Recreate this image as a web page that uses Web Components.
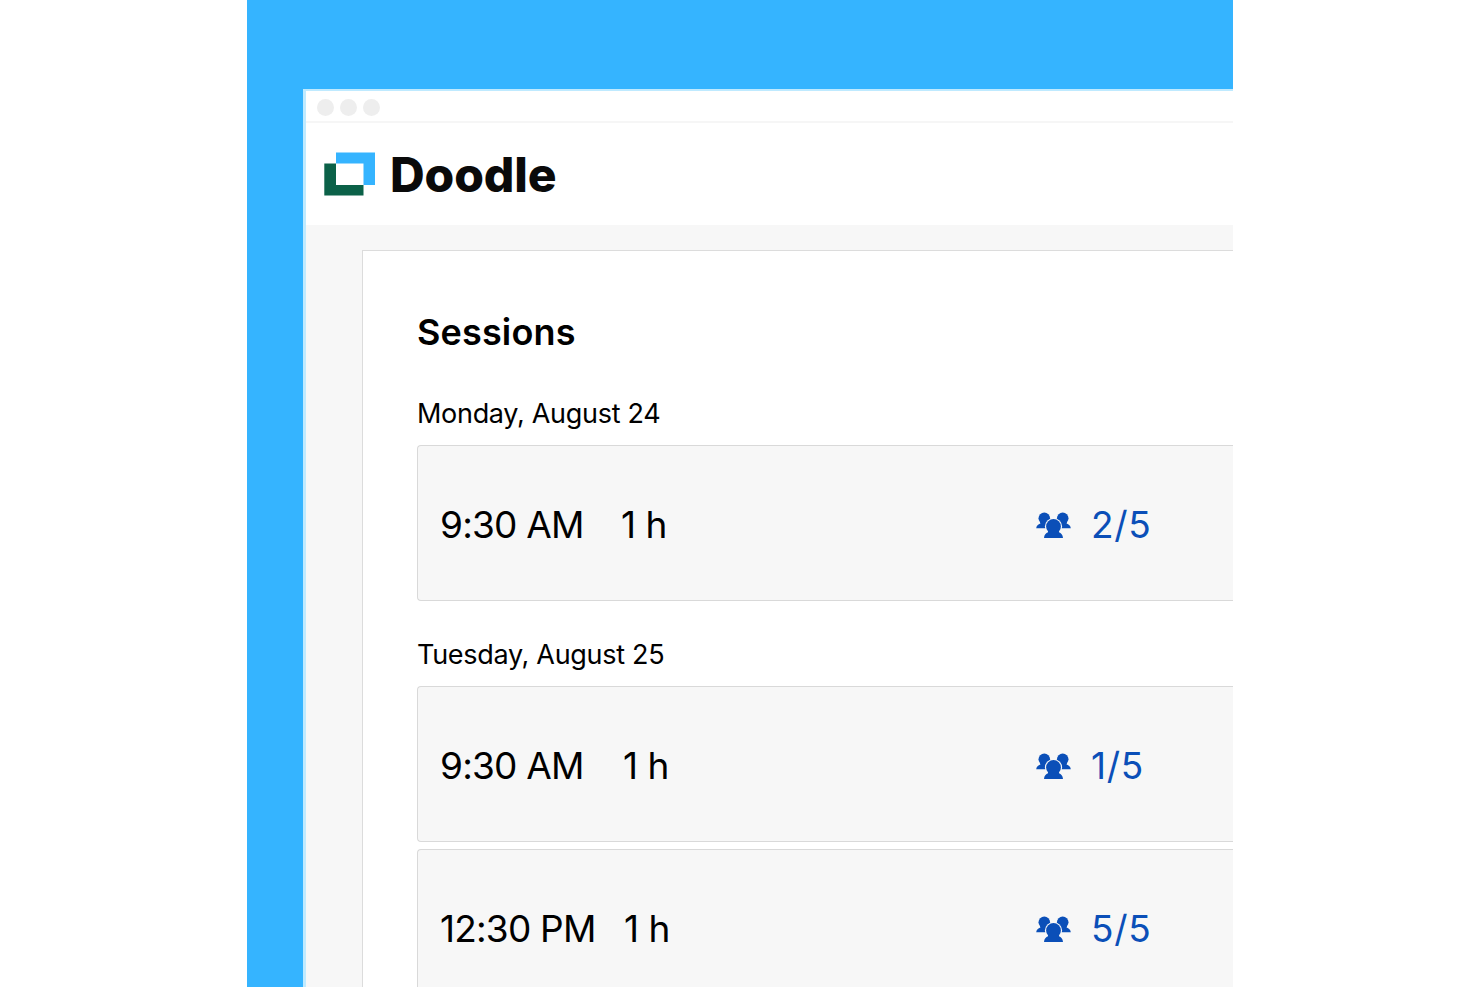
<!DOCTYPE html>
<html lang="en">
<head>
<meta charset="utf-8">
<title>Doodle</title>
<style>
  body {
    margin: 0;
    height: 987px;
    overflow: hidden;
    background: #fff;
    color: #000;
    font-family: Inter, "Liberation Sans", sans-serif;
  }
</style>
</head>
<body>
<app-stage>
  <browser-window>
    <doodle-logo slot="header">Doodle</doodle-logo>
    <session-list heading="Sessions">
      <session-day date="Monday, August 24">
        <session-row time="9:30 AM" duration="1 h" seats="2/5" style="--time-width: 181px"></session-row>
      </session-day>
      <session-day date="Tuesday, August 25">
        <session-row time="9:30 AM" duration="1 h" seats="1/5"></session-row>
        <session-row time="12:30 PM" duration="1 h" seats="5/5" style="--time-width: 184px"></session-row>
      </session-day>
    </session-list>
  </browser-window>
</app-stage>

<script>
class AppStage extends HTMLElement {
  constructor() {
    super();
    this.attachShadow({ mode: 'open' }).innerHTML = `
      <style>
        :host {
          display: block;
          box-sizing: border-box;
          width: 986px;
          height: 987px;
          margin: 0 auto;
          padding: 89px 0 0 56px;
          background: #35b4ff;
          overflow: hidden;
        }
      </style>
      <slot></slot>
    `;
  }
}
window.customElements.define('app-stage', AppStage);

class BrowserWindow extends HTMLElement {
  constructor() {
    super();
    this.attachShadow({ mode: 'open' }).innerHTML = `
      <style>
        :host {
          display: block;
          box-sizing: border-box;
          height: 898px;
          border: solid #bfeaff;
          border-width: 2px 0 0 3px;
          background: #f7f7f7;
        }
        .bar {
          display: flex;
          align-items: center;
          gap: 6px;
          box-sizing: border-box;
          height: 32px;
          padding: 2px 0 0 11px;
          border-bottom: 2px solid #f6f6f6;
          background: #fff;
        }
        .dot {
          width: 17px;
          height: 17px;
          border-radius: 50%;
          background: #eee;
        }
        header {
          display: flex;
          align-items: center;
          box-sizing: border-box;
          height: 102px;
          padding-left: 18px;
          background: #fff;
        }
        main {
          padding: 25px 0 0 56px;
        }
      </style>
      <div class="bar">
        <span class="dot"></span><span class="dot"></span><span class="dot"></span>
      </div>
      <header><slot name="header"></slot></header>
      <main><slot></slot></main>
    `;
  }
}
window.customElements.define('browser-window', BrowserWindow);

class DoodleLogo extends HTMLElement {
  constructor() {
    super();
    this.attachShadow({ mode: 'open' }).innerHTML = `
      <style>
        :host {
          display: flex;
          align-items: center;
          gap: 14px;
          color: #0a0a0a;
          font-size: 48px;
          font-weight: 800;
          line-height: 60px;
          letter-spacing: -0.1px;
        }
        svg {
          display: block;
        }
        span {
          padding-top: 1px;
        }
      </style>
      <svg width="52" height="44" viewBox="0 0 52 44">
        <path fill="#35b4ff" d="M12 0.5H51V33H39.5V11.5H12Z"/>
        <path fill="#0b6148" d="M0.3 11.5H12V33H39.5V43.5H0.3Z"/>
      </svg>
      <span><slot></slot></span>
    `;
  }
}
window.customElements.define('doodle-logo', DoodleLogo);

class SessionList extends HTMLElement {
  constructor() {
    super();
    this.attachShadow({ mode: 'open' }).innerHTML = `
      <style>
        :host {
          display: block;
          box-sizing: border-box;
          height: 737px;
          padding: 56px 0 0 54px;
          border: solid #dcdcdc;
          border-width: 1px 0 0 1px;
          background: #fff;
        }
        h1 {
          margin: 0 0 38px;
          font-size: 36px;
          font-weight: 600;
          line-height: 50px;
          letter-spacing: 0.15px;
        }
        .days {
          display: flex;
          flex-direction: column;
          gap: 35px;
        }
      </style>
      <h1>${this.getAttribute('heading')}</h1>
      <div class="days"><slot></slot></div>
    `;
  }
}
window.customElements.define('session-list', SessionList);

class SessionDay extends HTMLElement {
  constructor() {
    super();
    this.attachShadow({ mode: 'open' }).innerHTML = `
      <style>
        :host {
          display: block;
        }
        h2 {
          margin: 0 0 12px;
          font-size: 27px;
          font-weight: 400;
          line-height: 38px;
          letter-spacing: -0.3px;
        }
        .rows {
          display: flex;
          flex-direction: column;
          gap: 7px;
        }
      </style>
      <h2>${this.getAttribute('date')}</h2>
      <div class="rows"><slot></slot></div>
    `;
  }
}
window.customElements.define('session-day', SessionDay);

class PeopleIcon extends HTMLElement {
  constructor() {
    super();
    this.attachShadow({ mode: 'open' }).innerHTML = `
      <style>
        :host, svg {
          display: block;
        }
        .back, .front {
          fill: currentColor;
        }
        .gap {
          fill: #f7f7f7;
        }
      </style>
      <svg width="37" height="28" viewBox="0 0 37 28">
        <g class="back">
          <circle cx="9.3" cy="7.3" r="5.8"/>
          <path d="M5 10H13V17.2H1.2C1.4 14.8 3.2 13.6 5.4 12.6Z"/>
          <circle cx="27.7" cy="7.3" r="5.8"/>
          <path d="M32 10H24V17.2H35.8C35.6 14.8 33.8 13.6 31.6 12.6Z"/>
        </g>
        <circle class="gap" cx="18.5" cy="15.5" r="8.6"/>
        <g class="front">
          <circle cx="18.5" cy="15.5" r="7.4"/>
          <path d="M13 19H24V21.2C26 22.1 27.8 23.6 28 27H9C9.2 23.6 11 22.1 13 21.2Z"/>
        </g>
      </svg>
    `;
  }
}
window.customElements.define('people-icon', PeopleIcon);

class SessionRow extends HTMLElement {
  constructor() {
    super();
    this.attachShadow({ mode: 'open' }).innerHTML = `
      <style>
        :host {
          display: grid;
          grid-template-columns: var(--time-width, 183px) 1fr 37px 161px;
          align-items: center;
          box-sizing: border-box;
          height: 156px;
          padding: 4px 0 0 22px;
          border: 1px solid #d9d9d9;
          border-right: 0;
          border-radius: 4px 0 0 4px;
          background: #f7f7f7;
          font-size: 37px;
          line-height: 48px;
          letter-spacing: -0.5px;
        }
        .time {
          letter-spacing: -0.8px;
        }
        .seats {
          padding-left: 19px;
          letter-spacing: 0.7px;
        }
        people-icon, .seats {
          color: #0b4fb8;
        }
      </style>
      <span class="time">${this.getAttribute('time')}</span>
      <span class="duration">${this.getAttribute('duration')}</span>
      <people-icon></people-icon>
      <span class="seats">${this.getAttribute('seats')}</span>
    `;
  }
}
window.customElements.define('session-row', SessionRow);
</script>
</body>
</html>
